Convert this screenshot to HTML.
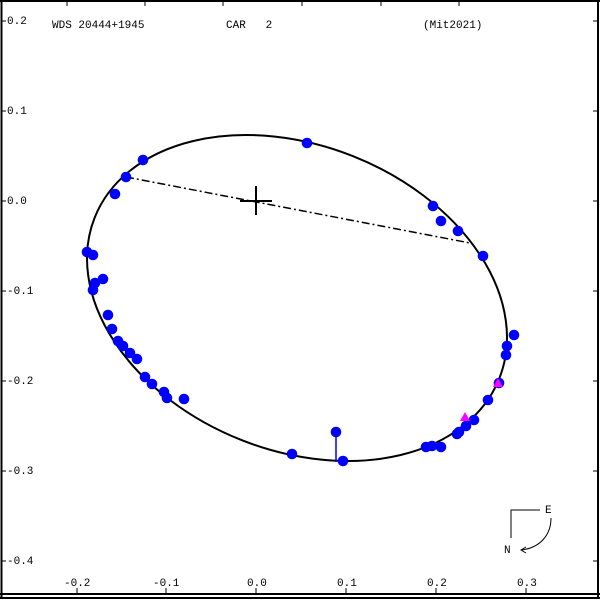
<!DOCTYPE html>
<html><head><meta charset="utf-8"><style>
html,body{margin:0;padding:0;background:#fff;width:600px;height:600px;overflow:hidden}
svg{display:block}
text{font-family:"Liberation Mono","DejaVu Sans Mono",monospace;font-size:11px;fill:#000;white-space:pre}
</style></head><body>
<svg width="600" height="600" viewBox="0 0 600 600">
<rect x="0" y="0" width="600" height="600" fill="#fff"/>
<g stroke="#000" stroke-width="2" fill="none">
<line x1="0" y1="1" x2="600" y2="1"/>
<line x1="1.5" y1="0" x2="1.5" y2="598"/>
<line x1="598" y1="0" x2="598" y2="598"/>
<line x1="0" y1="594" x2="600" y2="594"/>
<line x1="0" y1="598" x2="600" y2="598"/>
</g>
<g stroke="#000" stroke-width="1">
<line x1="67" y1="0" x2="67" y2="6"/><line x1="145" y1="0" x2="145" y2="6"/><line x1="223" y1="0" x2="223" y2="6"/><line x1="302" y1="0" x2="302" y2="6"/><line x1="381" y1="0" x2="381" y2="6"/><line x1="459" y1="0" x2="459" y2="6"/>
<line x1="77" y1="588" x2="77" y2="594"/><line x1="166" y1="588" x2="166" y2="594"/><line x1="256" y1="588" x2="256" y2="594"/><line x1="346" y1="588" x2="346" y2="594"/><line x1="436" y1="588" x2="436" y2="594"/><line x1="526" y1="588" x2="526" y2="594"/>
<line x1="2" y1="21" x2="6" y2="21"/><line x1="2" y1="111" x2="6" y2="111"/><line x1="2" y1="201" x2="6" y2="201"/><line x1="2" y1="291" x2="6" y2="291"/><line x1="2" y1="381" x2="6" y2="381"/><line x1="2" y1="471" x2="6" y2="471"/><line x1="2" y1="561" x2="6" y2="561"/>
<line x1="593" y1="21" x2="598" y2="21"/><line x1="593" y1="111" x2="598" y2="111"/><line x1="593" y1="201" x2="598" y2="201"/><line x1="593" y1="291" x2="598" y2="291"/><line x1="593" y1="381" x2="598" y2="381"/><line x1="593" y1="471" x2="598" y2="471"/><line x1="593" y1="561" x2="598" y2="561"/>
</g>
<text x="7" y="24">0.2</text><text x="7" y="114">0.1</text><text x="7" y="204">0.0</text>
<text x="7" y="294">-0.1</text><text x="7" y="384">-0.2</text><text x="7" y="474">-0.3</text><text x="7" y="564">-0.4</text>
<text x="64" y="586">-0.2</text><text x="153" y="586">-0.1</text><text x="247" y="586">0.0</text><text x="337" y="586">0.1</text><text x="427" y="586">0.2</text><text x="517" y="586">0.3</text>
<text x="52" y="28">WDS 20444+1945</text><text x="226" y="28" xml:space="preserve">CAR   2</text><text x="423" y="28">(Mit2021)</text>
<ellipse cx="297" cy="298" rx="217.7" ry="152.5" transform="rotate(21.7 297 298)" fill="none" stroke="#000" stroke-width="2"/>
<line x1="126" y1="177" x2="470" y2="243" stroke="#000" stroke-width="1.5" stroke-dasharray="8,3,2,3"/>
<g stroke="#000" stroke-width="2"><line x1="256" y1="186" x2="256" y2="215"/><line x1="240" y1="201" x2="272" y2="201"/></g>
<line x1="336" y1="432" x2="336" y2="462" stroke="#00f" stroke-width="1.5"/>
<g fill="#00f">
<circle cx="307" cy="143" r="5.3"/><circle cx="143" cy="160" r="5.3"/><circle cx="126" cy="177" r="5.3"/><circle cx="115" cy="194" r="5.3"/>
<circle cx="87" cy="252" r="5.3"/><circle cx="93" cy="255" r="5.3"/><circle cx="95" cy="283" r="5.3"/><circle cx="93" cy="290" r="5.3"/><circle cx="103" cy="279" r="5.3"/>
<circle cx="108" cy="315" r="5.3"/><circle cx="112" cy="329" r="5.3"/><circle cx="118" cy="341" r="5.3"/><circle cx="123" cy="346" r="5.3"/><circle cx="130" cy="353" r="5.3"/><circle cx="137" cy="359" r="5.3"/>
<circle cx="145" cy="377" r="5.3"/><circle cx="152" cy="384" r="5.3"/><circle cx="164" cy="392" r="5.3"/><circle cx="167" cy="398" r="5.3"/><circle cx="184" cy="399" r="5.3"/>
<circle cx="292" cy="454" r="5.3"/><circle cx="336" cy="432" r="5.3"/><circle cx="343" cy="461" r="5.3"/>
<circle cx="433" cy="206" r="5.3"/><circle cx="441" cy="221" r="5.3"/><circle cx="458" cy="231" r="5.3"/><circle cx="483" cy="256" r="5.3"/>
<circle cx="514" cy="335" r="5.3"/><circle cx="507" cy="346" r="5.3"/><circle cx="506" cy="355" r="5.3"/><circle cx="499" cy="383" r="5.3"/><circle cx="488" cy="400" r="5.3"/>
<circle cx="474" cy="420" r="5.3"/><circle cx="466" cy="426" r="5.3"/><circle cx="459" cy="432" r="5.3"/><circle cx="457" cy="434" r="5.3"/>
<circle cx="441" cy="447" r="5.3"/><circle cx="432" cy="446" r="5.3"/><circle cx="426" cy="447" r="5.3"/>
</g>
<g fill="#f0f"><polygon points="465,412 460,421 470,421"/><polygon points="498,378 493,387 503,387"/></g>
<g stroke="#000" stroke-width="1" fill="none">
<polyline points="511,538 511,510 540,510"/>
<path d="M551,518 C551,535 540,548 521,550"/>
<polyline points="526,547 521,550 526,553"/>
</g>
<text x="545" y="513">E</text><text x="504" y="553">N</text>
</svg>
</body></html>
